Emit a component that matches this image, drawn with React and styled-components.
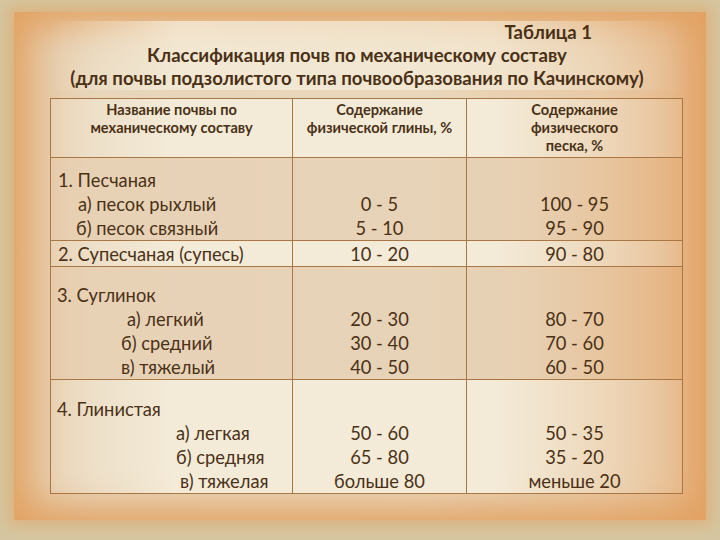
import styled, { createGlobalStyle } from "styled-components"

const GlobalStyle = createGlobalStyle`
  html, body {
    margin: 0;
    padding: 0;
    background: #d5c7a2;
  }
  body {
    font-family: Lato, "Open Sans", "Noto Sans", sans-serif;
    color: #4a3116;
  }
`

const Page = styled.div`
  width: 720px;
  height: 540px;
  box-sizing: border-box;
  padding: 12px 16px 20px 14px;
  display: flex;
  overflow: hidden;
`

const Frame = styled.div`
  flex: 1;
  box-sizing: border-box;
  padding: 9px 23px 0 36px;
  background: linear-gradient(
    to right,
    #e6c6a0 0%,
    #e8d6bb 12%,
    #e9d7bb 60%,
    #e8caa6 85%,
    #e6b484 100%
  );
  box-shadow:
    inset 0 0 34px 14px rgba(226, 160, 96, 0.95),
    0 0 14px 6px rgba(226, 165, 104, 0.6);
  display: flex;
  flex-direction: column;
`

const Title = styled.div`
  padding-right: 19px;
  font-size: 18.6px;
  font-weight: 700;
  line-height: 23px;
  text-align: center;
  color: #4a3116;
  background: linear-gradient(
    to right,
    rgba(246, 238, 220, 0) 0%,
    rgba(246, 238, 220, 0.75) 20%,
    rgba(246, 238, 220, 0.65) 70%,
    rgba(246, 238, 220, 0) 100%
  );
`

const TitleNumber = styled.div`
  text-align: right;
  padding-right: 72px;
`

const Table = styled.table`
  margin-top: 8px;
  width: 632px;
  border-collapse: collapse;
  table-layout: fixed;
  font-size: 18.3px;
  line-height: 24px;
`

const Row = styled.tr`
  background: ${p =>
    p.$light
      ? "linear-gradient(to right, rgba(244,236,218,0.2) 0%, rgba(244,236,218,0.95) 20%, rgba(244,236,218,0.95) 70%, rgba(236,200,160,0.3) 100%)"
      : "linear-gradient(to right, rgba(232,205,175,0.5) 0%, rgba(230,208,180,0.6) 20%, rgba(230,208,180,0.6) 75%, rgba(230,170,110,0.4) 100%)"};
`

const HeadCell = styled.th`
  border: 1px solid #a87745;
  vertical-align: top;
  text-align: center;
  font-size: 14.6px;
  font-weight: 700;
  line-height: 18px;
  padding: 2px 4px 0;
  height: 56px;
  color: #4a3116;
`

const Cell = styled.td`
  border: 1px solid #a87745;
  vertical-align: bottom;
  text-align: ${p => (p.$left ? "left" : "center")};
  height: ${p => p.$h}px;
  padding: 0 4px 0 ${p => (p.$left ? 6 : 4)}px;
  color: #4a3116;
`

const Line = styled.div`
  padding-left: ${p => p.$indent || 0}px;
  white-space: nowrap;
`

const rows = [
  {
    h: 82,
    names: [
      ["1. Песчаная", 1],
      ["а) песок рыхлый", 21],
      ["б) песок связный", 19],
    ],
    clay: ["0 - 5", "5 - 10"],
    sand: ["100 - 95", "95 - 90"],
  },
  {
    h: 25,
    light: true,
    names: [["2. Супесчаная (супесь)", 1]],
    clay: ["10 - 20"],
    sand: ["90 - 80"],
  },
  {
    h: 112,
    names: [
      ["3. Суглинок", -3],
      ["а) легкий", 70],
      ["б) средний", 64],
      ["в) тяжелый", 64],
    ],
    clay: ["20 - 30", "30 - 40", "40 - 50"],
    sand: ["80 - 70", "70 - 60", "60 - 50"],
  },
  {
    h: 113,
    light: true,
    names: [
      ["4. Глинистая", -4],
      ["а) легкая", 119],
      ["б) средняя", 119],
      ["в) тяжелая", 123],
    ],
    clay: ["50 - 60", "65 - 80", "больше 80"],
    sand: ["50 - 35", "35 - 20", "меньше 20"],
  },
]

export default function App() {
  return (
    <>
      <GlobalStyle />
      <Page>
        <Frame>
          <Title>
            <TitleNumber>Таблица 1</TitleNumber>
            <div>Классификация почв по механическому составу</div>
            <div>(для почвы подзолистого типа почвообразования по Качинскому)</div>
          </Title>
          <Table>
            <colgroup>
              <col style={{ width: 242 }} />
              <col style={{ width: 174 }} />
              <col style={{ width: 216 }} />
            </colgroup>
            <thead>
              <Row $light>
                <HeadCell>
                  Название почвы по
                  <br />
                  механическому составу
                </HeadCell>
                <HeadCell>
                  Содержание
                  <br />
                  физической глины, %
                </HeadCell>
                <HeadCell>
                  Содержание
                  <br />
                  физического
                  <br />
                  песка, %
                </HeadCell>
              </Row>
            </thead>
            <tbody>
              {rows.map((r, i) => (
                <Row key={i} $light={r.light}>
                  <Cell $left $h={r.h}>
                    {r.names.map(([t, ind]) => (
                      <Line key={t} $indent={ind}>
                        {t}
                      </Line>
                    ))}
                  </Cell>
                  <Cell $h={r.h}>
                    {r.clay.map(t => (
                      <Line key={t}>{t}</Line>
                    ))}
                  </Cell>
                  <Cell $h={r.h}>
                    {r.sand.map(t => (
                      <Line key={t}>{t}</Line>
                    ))}
                  </Cell>
                </Row>
              ))}
            </tbody>
          </Table>
        </Frame>
      </Page>
    </>
  )
}
